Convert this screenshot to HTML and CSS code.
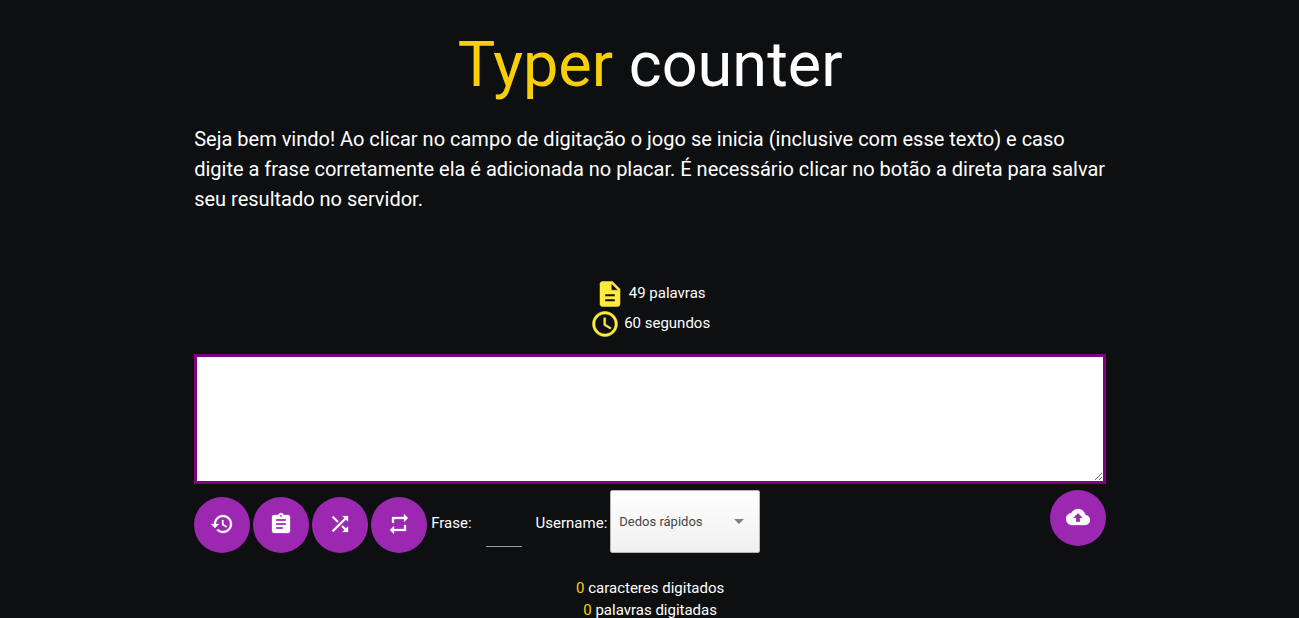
FILE: index.html
```html
<!DOCTYPE html>
<html lang="pt-BR">
<head>
<meta charset="utf-8">
<meta name="viewport" content="width=device-width, initial-scale=1">
<title>Typer counter</title>
<link rel="stylesheet" href="styles.css">
</head>
<body>
<main class="container">
  <h1 class="title"><span class="highlight">Typer</span> counter</h1>
  <p class="phrase">Seja bem vindo! Ao clicar no campo de digitação o jogo se inicia (inclusive com esse texto) e caso digite a frase corretamente ela é adicionada no placar. É necessário clicar no botão a direta para salvar seu resultado no servidor.</p>
  <ul class="info">
    <li><svg class="info-icon" viewBox="0 0 24 24" aria-hidden="true"><path d="M14 2H6c-1.100 0-1.990.9-1.990 2L4 20c0 1.100.89 2 1.990 2H18c1.100 0 2-.9 2-2V8l-6-6zm2 16H8v-2h8v2zm0-4H8v-2h8v2zm-3-5V3.500L18.500 9H13z"/></svg><span>49 palavras</span></li>
    <li><svg class="info-icon" viewBox="0 0 24 24" aria-hidden="true"><path d="M11.990 2C6.470 2 2 6.480 2 12s4.470 10 9.990 10C17.520 22 22 17.520 22 12S17.520 2 11.990 2zM12 20c-4.420 0-8-3.580-8-8s3.580-8 8-8 8 3.580 8 8-3.580 8-8 8zm.5-13H11v6l5.250 3.150.75-1.230-4.500-2.670z"/></svg><span>60 segundos</span></li>
  </ul>
  <textarea class="field" aria-label="Campo de digitação"></textarea>
  <div class="toolbar">
    <div class="actions">
      <button class="round" type="button" aria-label="Reiniciar"><svg viewBox="0 0 24 24"><path d="M13 3c-4.970 0-9 4.030-9 9H1l3.890 3.890.07.14L9 12H6c0-3.870 3.130-7 7-7s7 3.130 7 7-3.130 7-7 7c-1.930 0-3.680-.79-4.940-2.060l-1.420 1.420C8.270 19.990 10.510 21 13 21c4.970 0 9-4.030 9-9s-4.030-9-9-9zm-1 5v5l4.280 2.540.72-1.210-3.500-2.080V8H12z"/></svg></button>
      <button class="round" type="button" aria-label="Placar"><svg viewBox="0 0 24 24"><path d="M19 3h-4.180C14.400 1.840 13.300 1 12 1c-1.300 0-2.400.84-2.820 2H5c-1.100 0-2 .9-2 2v14c0 1.100.9 2 2 2h14c1.100 0 2-.9 2-2V5c0-1.100-.9-2-2-2zm-7 0c.55 0 1 .45 1 1s-.45 1-1 1-1-.45-1-1 .45-1 1-1zm2 14H7v-2h7v2zm3-4H7v-2h10v2zm0-4H7V7h10v2z"/></svg></button>
      <button class="round" type="button" aria-label="Frase aleatória"><svg viewBox="0 0 24 24"><path d="M10.590 9.170L5.410 4 4 5.410l5.170 5.170 1.420-1.410zM14.500 4l2.040 2.040L4 18.590 5.410 20 17.960 7.460 20 9.500V4h-5.500zm.33 9.410l-1.410 1.410 3.130 3.130L14.500 20H20v-5.500l-2.040 2.040-3.130-3.130z"/></svg></button>
      <button class="round" type="button" aria-label="Trocar frase"><svg viewBox="0 0 24 24"><path d="M7 7h10v3l4-4-4-4v3H5v6h2V7zm10 10H7v-3l-4 4 4 4v-3h12v-6h-2v4z"/></svg></button>
    </div>
    <label for="phrase-id">Frase:</label>
    <input class="number" id="phrase-id" type="text" inputmode="numeric">
    <label for="user">Username:</label>
    <div class="select-box">
      <select class="select" id="user"><option>Dedos rápidos</option></select>
      <svg class="arrow" viewBox="0 0 10 5" aria-hidden="true"><path d="M0 0h10L5 5z"/></svg>
    </div>
    <button class="round upload" type="button" aria-label="Salvar no servidor"><svg viewBox="0 0 24 24"><path d="M19.350 10.040C18.670 6.590 15.640 4 12 4 9.110 4 6.600 5.640 5.350 8.040 2.340 8.360 0 10.910 0 14c0 3.310 2.690 6 6 6h13c2.760 0 5-2.240 5-5 0-2.640-2.050-4.780-4.650-4.960zM14 13v4h-4v-4H7l5-5 5 5h-3z"/></svg></button>
  </div>
  <div class="counts">
    <p><span class="highlight">0</span> caracteres digitados</p>
    <p><span class="highlight">0</span> palavras digitadas</p>
  </div>
</main>
</body>
</html>
```
FILE: styles.css
```css
* {
  box-sizing: border-box;
}

html {
  overflow: hidden;
}

body {
  margin: 0;
  background: #0e0f11;
  color: #fff;
  font: 15px/22px Roboto, sans-serif;
}

.container {
  width: 70.2%;
  margin-left: 14.95%;
  padding-top: 30px;
}

.title {
  margin: 0 0 25px;
  font-size: 63px;
  font-weight: 400;
  line-height: 69px;
  text-align: center;
}

.highlight {
  color: #f6cf0a;
}

.phrase {
  margin: 0 0 65px;
  font-size: 20px;
  line-height: 30px;
}

.info {
  margin: 0 0 15px;
  padding: 0;
  list-style: none;
}

.info li {
  display: flex;
  align-items: center;
  justify-content: center;
  gap: 4px;
  height: 30px;
}

.info li span {
  padding-bottom: 2px;
}

.info-icon {
  width: 30px;
  height: 30px;
  fill: #ffeb3b;
  stroke: #ffeb3b;
  stroke-width: 0.4;
}

.field {
  display: block;
  width: 100%;
  height: 130px;
  padding: 2px;
  border: 3px solid purple;
  border-radius: 0;
  outline: 0;
  background: #fff;
  font: inherit;
  color: #000;
}

.toolbar {
  display: flex;
  align-items: center;
  margin: 6px 0 24px;
}

.actions {
  display: flex;
  align-self: flex-end;
  gap: 3px;
  margin-right: 4px;
}

.round {
  display: grid;
  place-items: center;
  flex: none;
  width: 56px;
  height: 56px;
  padding: 0 0 2px;
  border: 0;
  border-radius: 50%;
  background: #9c27b0;
  cursor: pointer;
}

.round svg {
  width: 24px;
  height: 24px;
  fill: #fff;
  stroke: #fff;
  stroke-width: 0.3;
}

.toolbar label {
  padding-top: 2px;
}

.number {
  align-self: flex-end;
  width: 36px;
  height: 45px;
  margin: 0 14px 6px;
  padding: 0;
  border: 0;
  border-bottom: 1px solid #9e9e9e;
  outline: 0;
  background: transparent;
  color: #fff;
  font: inherit;
}

.select-box {
  display: grid;
  align-items: center;
  margin-left: 3px;
}

.select,
.arrow {
  grid-area: 1 / 1;
}

.select {
  width: 150px;
  height: 63px;
  padding: 0 8px;
  appearance: none;
  border: 1px solid #b5b5b5;
  border-radius: 2px;
  background: linear-gradient(#fff, #f0f0f0);
  color: #444;
  font: 13px Roboto, sans-serif;
}

.arrow {
  justify-self: end;
  width: 10px;
  height: 5px;
  margin-right: 16px;
  fill: #808080;
  pointer-events: none;
}

.upload {
  align-self: flex-start;
  margin-left: auto;
}

.counts {
  text-align: center;
}

.counts p {
  margin: 0;
}
```
